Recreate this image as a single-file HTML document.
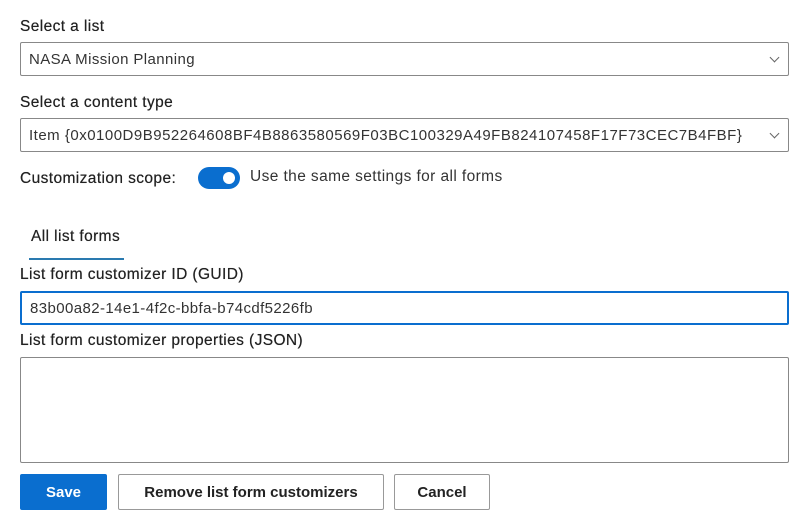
<!DOCTYPE html>
<html><head><style>
body{margin:0;width:800px;height:521px;background:#fff;font-family:"Liberation Sans",sans-serif;color:#222;position:relative;overflow:hidden}
.a{position:absolute}
.lbl{font-size:15.5px;color:#222;letter-spacing:0.4px;text-shadow:0 0 0.4px #222}
.box{border:1px solid #888;border-radius:2px;box-sizing:border-box;background:#fff;font-size:15px;letter-spacing:0.4px;color:#333;padding-left:8px;display:flex;align-items:center}
.chev{position:absolute;right:10px;top:11px;width:6px;height:6px;border-right:1px solid #666;border-bottom:1px solid #666;transform:rotate(45deg)}
.btn{position:absolute;top:474px;height:36px;box-sizing:border-box;border:1px solid #999;border-radius:2px;font-size:15px;font-weight:bold;display:flex;align-items:center;justify-content:center;color:#222;background:#fff}
</style></head><body>
<div class="a lbl" style="left:20px;top:18px">Select a list</div>
<div class="a box" style="left:20px;top:42px;width:769px;height:34px">NASA Mission Planning<span class="chev"></span></div>
<div class="a lbl" style="left:20px;top:94px">Select a content type</div>
<div class="a box" style="left:20px;top:118px;width:769px;height:34px;letter-spacing:0.5px">Item {0x0100D9B952264608BF4B8863580569F03BC100329A49FB824107458F17F73CEC7B4FBF}<span class="chev"></span></div>
<div class="a lbl" style="left:20px;top:170px">Customization scope:</div>
<div class="a" style="left:198px;top:167px;width:42px;height:22px;border-radius:11px;background:#0a6ecf"><div style="position:absolute;right:5px;top:5px;width:12px;height:12px;border-radius:50%;background:#fff"></div></div>
<div class="a lbl" style="left:250px;top:168px;text-shadow:none;color:#333">Use the same settings for all forms</div>
<div class="a lbl" style="left:31px;top:228px">All list forms</div>
<div class="a" style="left:29px;top:258px;width:95px;height:2px;background:#2a7ab0"></div>
<div class="a lbl" style="left:20px;top:266px">List form customizer ID (GUID)</div>
<div class="a box" style="left:20px;top:291px;width:769px;height:34px;border:2px solid #0a6ecf">83b00a82-14e1-4f2c-bbfa-b74cdf5226fb</div>
<div class="a lbl" style="left:20px;top:332px">List form customizer properties (JSON)</div>
<div class="a box" style="left:20px;top:357px;width:769px;height:106px"></div>
<div class="btn" style="left:20px;width:87px;background:#0a6ecf;border-color:#0a6ecf;color:#fff">Save</div>
<div class="btn" style="left:118px;width:266px">Remove list form customizers</div>
<div class="btn" style="left:394px;width:96px">Cancel</div>
</body></html>
